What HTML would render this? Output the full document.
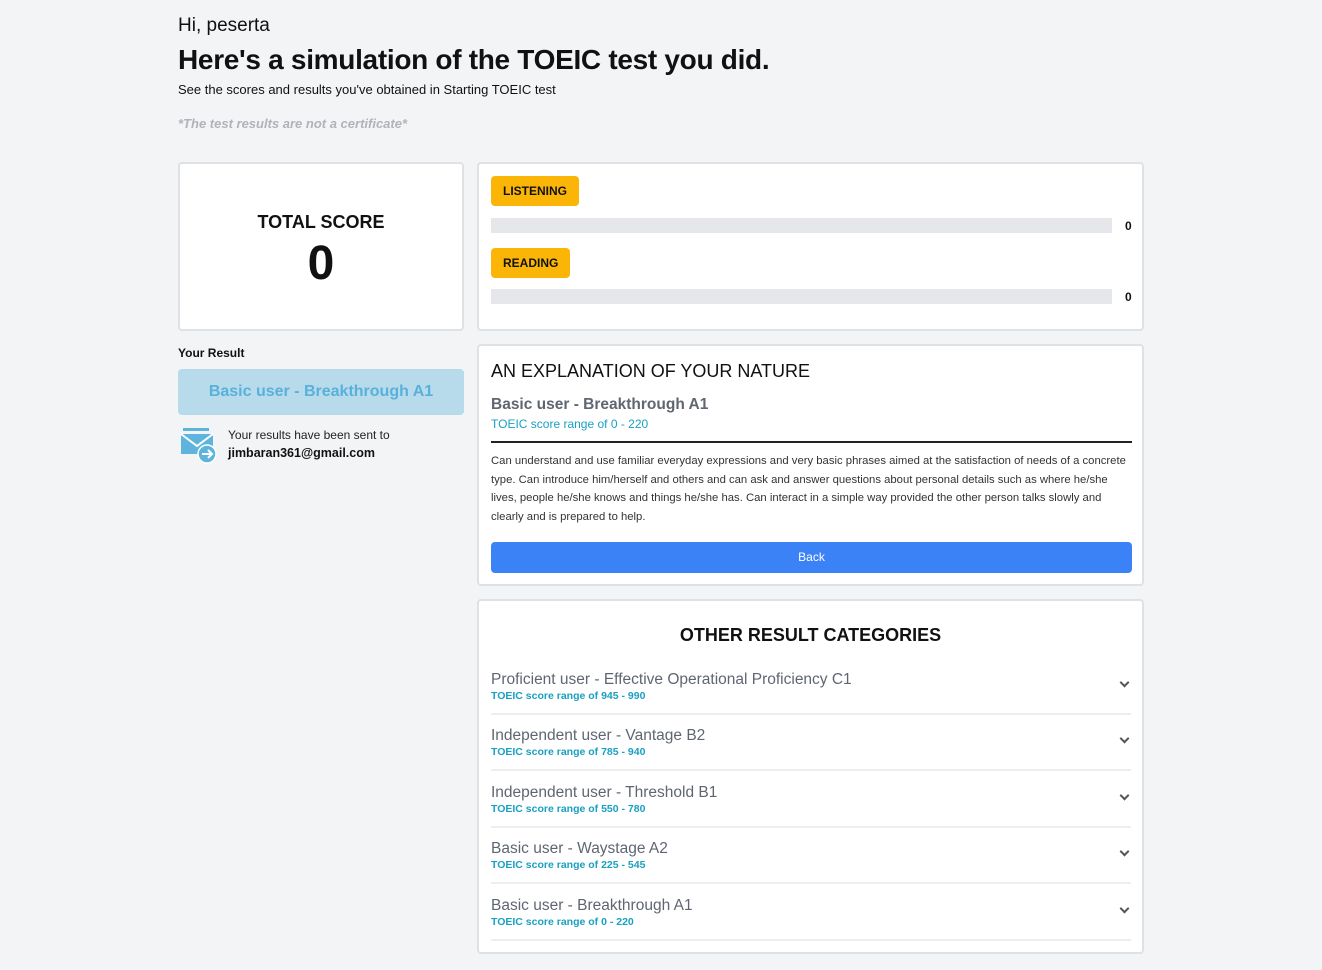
<!DOCTYPE html>
<html><head><meta charset="utf-8"><style>
*{box-sizing:border-box;margin:0;padding:0}
body{width:1322px;height:970px;background:#f3f4f6;font-family:"Liberation Sans",sans-serif;color:#111;position:relative;overflow:hidden}
.a{position:absolute}
.card{position:absolute;background:#fff;border:2px solid #dfe1e5;border-radius:4px}
.badge{position:absolute;left:12px;background:#fbb506;border-radius:4px;font-weight:bold;font-size:12px;height:30px;line-height:30px;padding:0 12px}
.bar{position:absolute;left:12px;width:621px;height:15px;background:#e5e7eb}
.num{position:absolute;left:646px;font-weight:bold;font-size:12px}
.item{position:absolute;left:12px;width:640px;height:56px;border-bottom:2px solid #eceef0}
.item .t{position:absolute;top:12px;font-size:15.5px;color:#5f6672}
.item .s{position:absolute;top:31px;font-size:10.5px;color:#1aa0c2;font-weight:bold}
.item .c{position:absolute;right:3px;top:20px;width:7px;height:7px;border-right:2px solid #555;border-bottom:2px solid #555;transform:rotate(45deg)}
</style></head><body>
<div class="a" style="left:178px;top:15px;font-size:19px">Hi, peserta</div>
<div class="a" style="left:178px;top:44px;font-size:28px;font-weight:bold;letter-spacing:-0.3px">Here's a simulation of the TOEIC test you did.</div>
<div class="a" style="left:178px;top:82px;font-size:13px">See the scores and results you've obtained in Starting TOEIC test</div>
<div class="a" style="left:178px;top:116px;font-size:13px;font-style:italic;font-weight:bold;color:#b0b3b8">*The test results are not a certificate*</div>

<div class="card" style="left:178px;top:162px;width:286px;height:169px">
<div class="a" style="left:0;width:282px;top:48px;text-align:center;font-size:18px;font-weight:bold">TOTAL SCORE</div>
<div class="a" style="left:0;width:282px;top:72px;text-align:center;font-size:48px;font-weight:bold">0</div>
</div>
<div class="a" style="left:178px;top:346px;font-size:12px;font-weight:bold">Your Result</div>
<div class="a" style="left:178px;top:369px;width:286px;height:46px;background:#b7dbea;border-radius:4px;text-align:center;line-height:46px;color:#59b0db;font-weight:bold;font-size:16px">Basic user - Breakthrough A1</div>
<svg class="a" style="left:180px;top:428px" width="38" height="36" viewBox="0 0 38 36">
<rect x="3" y="0" width="26" height="3" fill="#5fb4de"/>
<path d="M1 6h32v20H1z" fill="#5fb4de"/><path d="M1 6l16 12 16-12" stroke="#fff" stroke-width="2" fill="none"/>
<circle cx="27" cy="26" r="9" fill="#5fb4de" stroke="#fff" stroke-width="1.5"/><path d="M22 26h9M28 22l4 4-4 4" stroke="#fff" stroke-width="2" fill="none"/></svg>
<div class="a" style="left:228px;top:428px;font-size:12px;color:#222">Your results have been sent to</div>
<div class="a" style="left:228px;top:446px;font-size:12.5px;font-weight:bold">jimbaran361@gmail.com</div>

<div class="card" style="left:477px;top:162px;width:667px;height:169px">
<div class="badge" style="top:12px">LISTENING</div>
<div class="bar" style="top:54px"></div><div class="num" style="top:55px">0</div>
<div class="badge" style="top:84px">READING</div>
<div class="bar" style="top:125px"></div><div class="num" style="top:126px">0</div>
</div>

<div class="card" style="left:477px;top:344px;width:667px;height:242px">
<div class="a" style="left:12px;top:15px;font-size:18px">AN EXPLANATION OF YOUR NATURE</div>
<div class="a" style="left:12px;top:50px;font-size:15.5px;font-weight:bold;color:#5f6672">Basic user - Breakthrough A1</div>
<div class="a" style="left:12px;top:71px;font-size:12px;color:#1aa0c2">TOEIC score range of 0 - 220</div>
<div class="a" style="left:12px;top:95px;width:641px;height:2px;background:#222"></div>
<div class="a" style="left:12px;top:106px;width:641px;font-size:11.3px;line-height:18.6px;color:#333">Can understand and use familiar everyday expressions and very basic phrases aimed at the satisfaction of needs of a concrete type. Can introduce him/herself and others and can ask and answer questions about personal details such as where he/she lives, people he/she knows and things he/she has. Can interact in a simple way provided the other person talks slowly and clearly and is prepared to help.</div>
<div class="a" style="left:12px;top:196px;width:641px;height:31px;background:#3b82f6;border-radius:4px;color:#fff;text-align:center;line-height:31px;font-size:12px">Back</div>
</div>

<div class="card" style="left:477px;top:599px;width:667px;height:355px">
<div class="a" style="left:0;width:663px;top:24px;text-align:center;font-size:18px;font-weight:bold">OTHER RESULT CATEGORIES</div>
<div class="item" style="top:58px"><div class="t">Proficient user - Effective Operational Proficiency C1</div><div class="s">TOEIC score range of 945 - 990</div><div class="c"></div></div>
<div class="item" style="top:114px"><div class="t">Independent user - Vantage B2</div><div class="s">TOEIC score range of 785 - 940</div><div class="c"></div></div>
<div class="item" style="top:171px"><div class="t">Independent user - Threshold B1</div><div class="s">TOEIC score range of 550 - 780</div><div class="c"></div></div>
<div class="item" style="top:227px"><div class="t">Basic user - Waystage A2</div><div class="s">TOEIC score range of 225 - 545</div><div class="c"></div></div>
<div class="item" style="top:284px"><div class="t">Basic user - Breakthrough A1</div><div class="s">TOEIC score range of 0 - 220</div><div class="c"></div></div>
</div>
</body></html>
